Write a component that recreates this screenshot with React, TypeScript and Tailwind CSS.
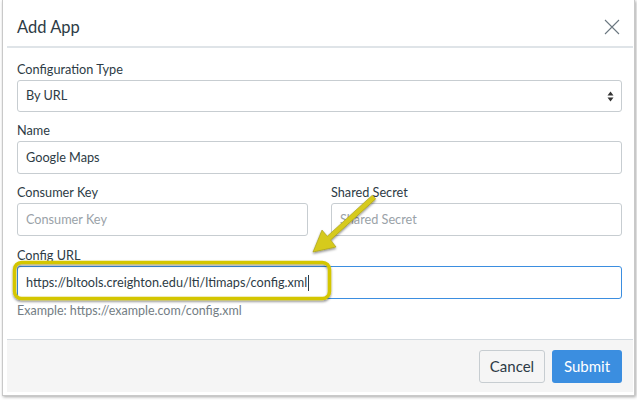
const font = { fontFamily: "Lato, 'Open Sans', sans-serif" }

const Label = ({ children }: { children: React.ReactNode }) => (
  <div className="text-[12.7px] leading-[14px] text-[#2d3b45] mb-[4px]">{children}</div>
)

const Field = ({ value, placeholder }: { value?: string; placeholder?: string }) => (
  <div className="h-[33px] border border-[#c7cdd1] rounded-[3px] flex items-center px-[8px] text-[12.7px] bg-white">
    {value ? (
      <span className="text-[#2d3b45]">{value}</span>
    ) : (
      <span className="text-[#9aa2a8]">{placeholder}</span>
    )}
  </div>
)

export default function App() {
  return (
    <div className="relative w-[637px] h-[400px] bg-white overflow-hidden" style={font}>
      {/* window frame */}
      <div className="ml-[2px] w-[633px] h-[396px] border-l border-r border-b border-[#c9c9c9] shadow-[1px_1px_3px_rgba(0,0,0,0.35)] bg-white pl-[4px] pt-[2px]">
        <div className="w-[626px] h-[390px] flex flex-col bg-white">
          {/* header */}
          <div className="h-[46px] flex items-center justify-between pl-[10px] pr-[13px] pt-[6px] border-b-2 border-[#dfe4e8]">
            <h1 className="text-[16.5px] text-[#2d3b45]">Add App</h1>
            <svg width="16" height="16" viewBox="0 0 16 16">
              <path d="M1 1 L15 15 M15 1 L1 15" stroke="#6b7780" strokeWidth="1.1" />
            </svg>
          </div>

          {/* body */}
          <div className="flex-1 pl-[10px] pr-[11px] pt-[14px]">
            <Label>Configuration Type</Label>
            <div className="h-[32px] border border-[#c7cdd1] rounded-[3px] flex items-center justify-between pl-[8px] pr-[7px] text-[12.7px] text-[#2d3b45]">
              <span>By URL</span>
              <svg width="7" height="11" viewBox="0 0 7 11">
                <path d="M3.5 0.5 L6.5 4.5 L0.5 4.5 Z M0.5 6.5 L6.5 6.5 L3.5 10.5 Z" fill="#333" />
              </svg>
            </div>

            <div className="mt-[11px]">
              <Label>Name</Label>
              <Field value="Google Maps" />
            </div>

            <div className="mt-[11px] grid grid-cols-2 gap-x-[23px]">
              <div>
                <Label>Consumer Key</Label>
                <Field placeholder="Consumer Key" />
              </div>
              <div>
                <Label>Shared Secret</Label>
                <Field placeholder="Shared Secret" />
              </div>
            </div>

            <div className="mt-[12px]">
              <Label>Config URL</Label>
              <div className="h-[33px] border border-[#3b8ee0] rounded-[3px] flex items-center px-[8px] text-[12.7px] text-[#2d3b45]">
                <span>https://bltools.creighton.edu/lti/ltimaps/config.xml</span>
                <span className="w-px h-[16px] bg-[#2d3b45] ml-[1px]" />
              </div>
              <div className="mt-[3px] text-[12.5px] text-[#737d84]">Example: https://example.com/config.xml</div>
            </div>
          </div>

          {/* footer */}
          <div className="h-[53px] bg-[#f5f5f5] border-t border-[#d5dbe0] flex items-center justify-end gap-[7px] pr-[11px]">
            <button className="h-[33px] w-[66px] rounded-[3px] border border-[#c7cdd1] bg-[#f5f5f5] text-[15px] text-[#2d3b45]">
              Cancel
            </button>
            <button className="h-[33px] w-[70px] rounded-[3px] bg-[#3b8ee0] text-[15px] text-white">
              Submit
            </button>
          </div>
        </div>
      </div>

      {/* annotation: highlight box and arrow */}
      <svg className="absolute left-0 top-0 pointer-events-none" width="637" height="400">
        <defs>
          <filter id="sh" x="-10%" y="-10%" width="120%" height="130%">
            <feDropShadow dx="0" dy="1.5" stdDeviation="1.2" floodColor="#000" floodOpacity="0.45" />
          </filter>
        </defs>
        <rect x="14.5" y="262.5" width="315" height="36" rx="7" fill="none" stroke="#d4c600" strokeWidth="3.5" filter="url(#sh)" />
        <g filter="url(#sh)">
          <path
            d="M372.3 195.2 L327.3 236.2 L322 230 L313 252 L336 247 L330.7 239.9 L375.7 198.9 Z"
            fill="#d6ca1e"
            stroke="#a39a10"
            strokeWidth="0.6"
            strokeLinejoin="round"
          />
        </g>
      </svg>
    </div>
  )
}
